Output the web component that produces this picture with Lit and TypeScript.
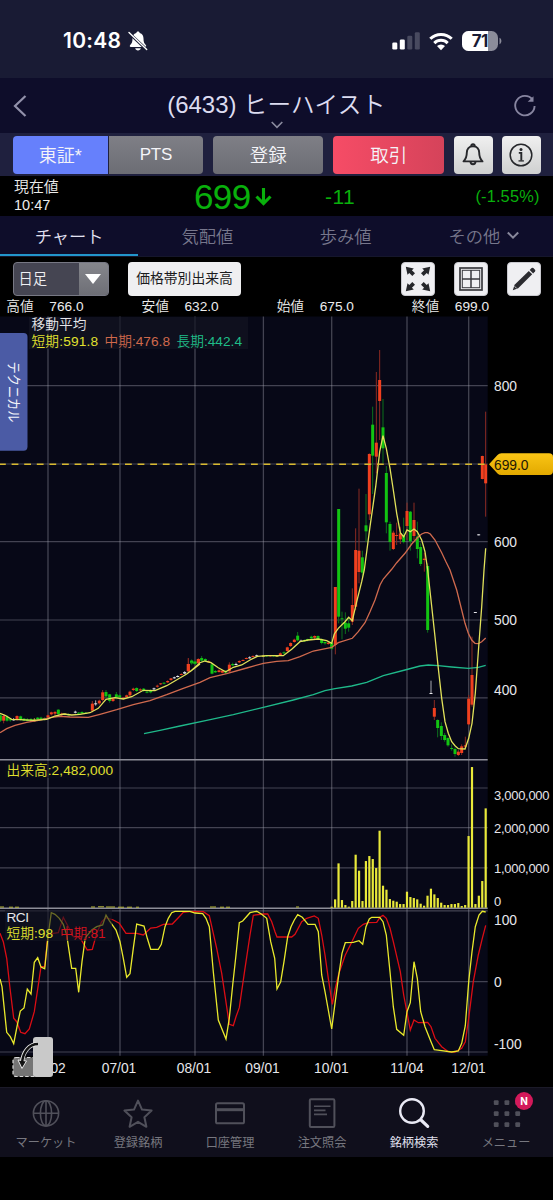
import { LitElement, html, svg, css } from "lit";
import { customElement, property } from "lit/decorators.js";

type Candle = [kind: string, x: number, high: number, top: number, bottom: number, low: number];

/* Point lists are kept in third-pixel units, relative to a local origin. */
const trace = (ox: number, oy: number, list: string): string =>
  list
    .trim()
    .split(/\s+/)
    .map((p) => {
      const [x, y] = p.split(",").map(Number);
      return `${(ox + x / 3).toFixed(1)},${(oy + y / 3).toFixed(1)}`;
    })
    .join(" ");

const candles = (ox: number, oy: number, list: string): Candle[] =>
  list
    .trim()
    .split(/\s+/)
    .map((c) => {
      const [k, x, h, t, b, l] = c.split(",");
      return [k, ox + +x / 3, oy + +h / 3, oy + +t / 3, oy + +b / 3, oy + +l / 3];
    });

const MA_SHORT = [
  trace(0, 600, "0,340 15,346 35,358 60,359 100,361 140,358 165,348 190,342 215,345 240,343 270,338 295,325 318,298 345,293 370,297 395,290 430,271 465,272 500,257 560,222 600,192"),
  trace(180, 580, "30,275 60,248 75,243 93,248 115,263 137,275 160,262 185,255 210,240 232,229 260,227 310,227 335,208 360,185 385,180 415,177 440,182 455,190"),
  trace(325, 560, "28,222 40,205 60,185 71,172 82,182 95,125 110,65"),
  trace(325, 340, "118,690 135,560 152,440 164,335 174,287 184,325 195,385 205,450 215,520 226,578 236,590 246,570 256,575 267,567 277,575 290,600 300,635 308,690"),
  trace(325, 560, "318,120 330,230 340,325 350,415 360,485 370,520 380,545 390,557 400,566 420,567 431,535 441,490 451,400 461,260 470,140"),
  trace(325, 340, "477,690 482,625"),
].join(" ");

const MA_MID = [
  trace(0, 600, "0,398 20,386 45,376 80,367 120,360 150,353 180,349 210,351 265,352 300,343 350,329 400,314 450,302 500,284 550,265 600,247"),
  trace(180, 580, "90,293 140,281 200,264 250,250 290,244 325,242 360,230 400,213 455,202"),
  trace(325, 560, "40,248 82,235 100,215 120,188 135,155 150,120 165,75 175,57 200,28"),
  trace(325, 340, "215,668 240,640 260,612 280,590 290,582 300,578 308,578 316,582 330,600 350,638 362,664"),
  trace(325, 560, "375,30 395,90 410,150 420,190 430,220 440,240 450,250 460,251 470,245 482,234"),
].join(" ");

const MA_LONG = [
  trace(0, 600, "432,401 480,391 540,378"),
  trace(180, 580, "0,438 80,421 160,404 250,382 340,360 400,344"),
  trace(325, 560, "0,392 30,386 80,378 125,367 175,347 240,330 285,318 310,315 340,317 380,321 430,325 460,322 482,316"),
].join(" ");

const RCI_SHORT = [
  trace(0, 755, "0,672 6,695 20,832 31,845 41,866 51,815 61,768 72,759 82,702 93,717 103,622 113,608 123,636 134,641 144,545 154,473 165,478 178,490 190,508 200,540 215,640 227,640 236,712 246,620 256,548 275,525 290,515 308,510 318,480 328,497 348,525 360,560 370,610 380,667 390,656 400,580 410,507 432,513 442,550 452,583 475,583 484,568 495,515 505,490 515,473 525,469 570,469 585,474 608,476 618,490 628,515 640,650 655,795 678,852 688,790 698,690 708,600 718,503 728,498 750,473 770,469 785,478 800,490 812,560 824,610"),
  trace(275, 755, "6,702 17,680 27,620 38,545 48,515 58,495 68,479 82,487 99,508 120,508 130,530 140,660 150,710 160,765 170,822 180,745 190,670 201,595 211,563 235,562 252,557 263,568 273,515 283,492 290,487 314,487 324,500 334,540 345,650 355,755 365,823 386,841 396,770 406,743 417,620 427,670 437,770 450,815 468,860 478,884 500,887 530,891 550,888 560,865 571,812 581,680 591,590 601,515 612,480 622,469 632,471"),
].join(" ");

const RCI_MID = [
  trace(0, 755, "0,535 10,560 20,610 30,700 41,790 50,800 62,832 75,836 88,822 103,770 115,690 123,635 134,635 144,540 160,535 175,533 190,487 205,515 220,545 240,548 262,585 277,583 290,535 305,500 318,488 340,495 358,505 378,535 410,535 430,540 452,519 470,517 490,508 517,507 535,488 550,472 575,469 610,470 628,482 650,580 665,655 688,808 700,812 708,785 718,758 735,640 750,540 760,481 790,477 803,477 815,500 825,530"),
  trace(275, 755, "6,546 50,546 60,538 80,500 95,490 118,483 130,490 140,540 150,600 160,670 172,748 181,700 191,657 211,600 232,558 250,520 265,508 280,503 305,502 315,487 324,481 334,490 345,520 355,560 376,650 386,720 406,825 417,795 430,803 458,802 468,815 480,850 500,875 520,890 540,891 560,880 571,860 581,790 595,680 610,600 622,550 632,511"),
].join(" ");

const CANDLES: Candle[] = [
  ...candles(0, 600, `g,1,340,346,362,366 r,11,342,348,362,370 g,21,345,350,362,365 g,31,355,358,361,365 w,41,354,357,361,362 r,51,346,348,360,362
    g,62,347,349,360,362 g,72,354,356,362,363 g,82,354,358,363,364 g,93,354,357,362,363 y,103,354,359,364,365 g,113,351,353,358,360
    g,123,350,353,359,361 g,134,352,354,359,361 r,144,344,346,352,354 r,154,335,337,343,346 r,165,333,336,341,348 g,175,328,329,342,346
    r,185,338,341,346,348 y,195,339,341,344,346 g,206,340,342,346,347 w,226,332,335,338,340 g,236,336,338,341,342 g,246,334,336,340,342
    g,257,336,338,340,342 r,277,303,311,332,337 w,287,301,310,313,317 r,298,299,302,310,314 r,308,270,277,300,304 g,318,270,276,289,294
    g,329,282,283,303,308 r,339,293,295,303,306 g,349,276,283,292,298 g,359,283,286,292,296 r,370,291,293,297,298 r,380,284,286,291,293
    r,390,272,275,286,290 r,400,263,266,270,273 g,410,262,264,273,276 r,421,265,268,271,273 g,431,264,266,273,276 g,441,272,275,278,280
    g,452,268,271,277,280 w,462,263,265,268,270 r,472,254,257,260,263 r,482,249,250,253,255 g,492,247,248,251,253 r,503,241,243,247,249
    r,513,234,235,240,243 w,523,230,232,234,236 w,533,226,228,231,232 r,544,220,222,224,226 w,554,214,217,220,222
    r,565,175,192,213,216 g,575,179,182,190,194 g,585,183,185,191,194 r,595,176,178,190,193`),
  ...candles(180, 580, `w,14,275,277,280,282 r,25,234,252,274,277 g,35,239,242,247,250 g,45,243,245,251,254 r,55,235,237,249,253
    g,65,228,234,242,245 g,76,235,237,242,244 r,86,241,244,247,249 g,96,250,253,281,283 g,106,270,273,277,279 r,117,268,271,276,278
    r,127,270,272,278,280 g,137,270,273,278,281 r,148,247,254,274,276 g,158,248,252,256,259 w,168,248,252,254,256 r,178,241,243,247,249
    r,189,238,240,242,243 r,199,232,234,236,238 w,209,229,232,234,236 r,219,226,228,231,232 w,230,224,226,228,229 y,250,225,227,228,230
    g,260,225,226,229,231 r,271,225,226,228,230 g,281,225,226,229,230 y,291,226,227,228,229 r,301,217,220,225,227 g,312,214,217,220,223
    r,322,200,202,213,216 r,332,187,189,198,201 r,343,176,179,186,188 g,353,156,167,181,184 w,363,179,182,184,186 g,373,178,180,184,186
    g,383,176,177,180,184 g,394,167,170,175,178 r,404,166,168,173,177 g,414,166,168,178,180 g,425,175,178,189,193 g,435,184,186,190,194
    r,445,186,188,192,194`),
  ...candles(325, 560, `g,20,240,248,266,270 r,31,81,81,255,283 g,41,-153,-153,170,190 g,51,155,175,178,238 g,61,157,188,206,222
    g,71,172,190,203,215 r,82,85,135,185,195 r,92,-95,-30,140,150 r,102,-214,-28,36,70 g,112,-28,-8,38,52`),
  ...candles(325, 340, `g,123,462,556,574,606 r,133,340,342,523,540 g,143,200,254,347,462 r,154,96,308,350,400 r,164,30,120,183,300
    g,174,177,262,325,370 g,184,378,399,547,580 g,195,545,552,606,632 r,205,572,578,627,630 r,215,548,585,588,615
    r,226,560,580,598,612 g,236,533,587,606,610 r,246,488,513,558,600 g,256,513,515,604,632 r,267,488,540,588,600 g,277,545,590,627,655
    g,287,610,621,672,678 r,298,638,656,660,695`),
  ...candles(325, 560, `g,308,10,18,210,218 w,318,362,399,402,402 r,328,420,444,470,480 g,338,478,480,504,532 g,349,487,498,528,540
    g,359,519,525,540,545 g,369,532,534,556,560 g,380,553,564,567,572 g,390,562,567,582,590 r,400,570,575,585,588 r,410,553,559,579,585
    r,421,530,556,560,568 r,431,405,416,493,495 r,441,230,345,434,440 w,451,156,156,159,159`),
  ...candles(325, 340, `w,461,583,583,586,586 r,472,347,348,417,418 r,482,215,373,430,530`),
];

const VOLUME = [
  3, 25, 133, 23, 8, 3, 20, 159, 111, 20, 140, 155, 146, 119, 231, 66, 54, 26, 21, 18, 11, 11, 48, 32, 29, 25, 12, 6, 36, 57, 40,
  29, 15, 8, 8, 11, 11, 14, 5, 8, 215, 422, 11, 36, 80, 298,
].map((h, i) => [331.7 + i * 3.422, h / 3]);

const INK: Record<string, string> = { r: "#f0401f", g: "#12c412", w: "#e8e8ec", y: "#dede30" };
const WICK: Record<string, string> = { r: "#8c2a22", g: "#0d701d", w: "#aaaab4", y: "#8d8d30" };

const COLS = [48, 120, 195, 263.4, 331.7, 407, 468.7];
const ROWS = [385.7, 464, 541.7, 620, 697.8, 788, 827.7, 867.8, 910.8, 981.6, 1052];

@customElement("price-chart")
export class PriceChart extends LitElement {
  static styles = css`
    :host { display: block; position: relative; width: 553px; height: 771px; }
    svg { display: block; }
    text { font-family: "Liberation Sans", "Noto Sans CJK JP", sans-serif; font-weight: 350; }
    .white { fill: #e6e6ea; }
    .yellow { fill: #e0e02e; }
    .orange { fill: #d0694c; }
    .green { fill: #1fbd88; }
    .red { fill: #d3121d; }
    .side { font-weight: 400; }
  `;
  render() {
    return html`<svg width="553" height="771" viewBox="0 316 553 771">
      <defs>
        <linearGradient id="gold" x1="0" y1="0" x2="0" y2="1"><stop offset="0" stop-color="#fac515"/><stop offset="1" stop-color="#e2a900"/></linearGradient>
      </defs>
      <rect x="0" y="316" width="553" height="771" fill="#000"/>
      <rect x="0" y="316.5" width="487.7" height="739.3" fill="#070817"/>
      ${COLS.map((x) => svg`<line x1=${x} x2=${x} y1="316.5" y2="1055.8" stroke="#a6a6b4" stroke-opacity=".38" stroke-width="1.3"/>`)}
      ${ROWS.map((y) => svg`<line x1="0" x2="487.7" y1=${y} y2=${y} stroke="#a6a6b4" stroke-opacity=".38" stroke-width="1.2"/>`)}
      <line x1="0" x2="487.7" y1="759.7" y2="759.7" stroke="#8d8d98" stroke-width="1.6"/>
      <line x1="0" x2="487.7" y1="908.3" y2="908.3" stroke="#8d8d98" stroke-width="1.4"/>

      ${CANDLES.map(([k, x, h, t, b, l]) => svg`
        <line x1=${x} x2=${x} y1=${h} y2=${l} stroke=${WICK[k]} stroke-width="1"/>
        <rect x=${x - 1.5} y=${t} width="3" height=${Math.max(b - t, 1)} fill=${INK[k]}/>`)}
      <polyline points=${MA_LONG} fill="none" stroke="#1fb98a" stroke-width="1.3"/>
      <polyline points=${MA_MID} fill="none" stroke="#d06a4e" stroke-width="1.3"/>
      <polyline points=${MA_SHORT} fill="none" stroke="#e2e25a" stroke-width="1.3"/>
      <line x1="0" x2="487" y1="464.3" y2="464.3" stroke="#d8b92e" stroke-width="1.4" stroke-dasharray="6.8 5.8" stroke-dashoffset="1"/>

      ${VOLUME.map(([x, h]) => svg`<rect x=${x - 1.1} y=${907.7 - h} width="2.2" height=${h} fill="#e9e93a"/>`)}
      <path d="M0 907h4M9 907.2h4M15 907.2h4M91 907h4M98 906.8h6M106 907h9M118 907.2h6M127 907.2h5M136 907.2h3M210 907h6M220 907.2h4M226 907.2h4M296 907h3" stroke="#b9b93c" stroke-width="1"/>

      <polyline points=${RCI_MID} fill="none" stroke="#db0d14" stroke-width="1.3"/>
      <polyline points=${RCI_SHORT} fill="none" stroke="#e9e92c" stroke-width="1.3"/>

      <rect x="29" y="317" width="219" height="32" fill="#131422" fill-opacity=".68"/>
      <rect x="5" y="761" width="110" height="17" fill="#0a0b19" fill-opacity=".5"/>
      <rect x="5" y="910" width="107" height="31" fill="#131422" fill-opacity=".6"/>
      <g font-size="13.7">
        <text class="white" x="31.5" y="329" textLength="55">移動平均</text>
        <text class="yellow" x="31.5" y="345.5" textLength="66.5">短期:591.8</text>
        <text class="orange" x="104.5" y="345.5" textLength="65.5">中期:476.8</text>
        <text class="green" x="176.5" y="345.5" textLength="65.5">長期:442.4</text>
        <text class="yellow" x="6.5" y="774.5" textLength="106.5">出来高:2,482,000</text>
        <text class="white" x="6.5" y="922" textLength="22.5">RCI</text>
        <text class="yellow" x="6.5" y="938" textLength="46.5">短期:98</text>
        <text class="red" x="60" y="938" textLength="45.5">中期:81</text>
      </g>
      <g class="white" font-size="13.8">
        <text x="494" y="390.500">800</text>
        <text x="494" y="547">600</text>
        <text x="494" y="625">500</text>
        <text x="494" y="695">400</text>
        <text x="494" y="924.500">100</text>
        <text x="494" y="986.500">0</text>
        <text x="494" y="1049">-100</text>
        <text x="494" y="800" font-size="13" textLength="55.5">3,000,000</text>
        <text x="494" y="832.500" font-size="13" textLength="55.5">2,000,000</text>
        <text x="494" y="872.500" font-size="13" textLength="55.5">1,000,000</text>
        <text x="494" y="905.500" font-size="13">0</text>
      </g>
      <g class="white" font-size="13.8" text-anchor="middle">
        <text x="48.5" y="1073">06/02</text><text x="119" y="1073">07/01</text><text x="194" y="1073">08/01</text>
        <text x="262.5" y="1073">09/01</text><text x="331.3" y="1073">10/01</text><text x="407" y="1073">11/04</text><text x="468.5" y="1073">12/01</text>
      </g>

      <path d="M489 464.300 L497.500 455 Q499 453.300 501.500 453.300 H549 Q553 453.300 553 457 V471 Q553 475 549 475 H501.500 Q499 475 497.500 473.500 Z" fill="url(#gold)"/>
      <text x="494" y="469.500" font-size="13.8" fill="#1d1705" textLength="34.500">699.0</text>

      <path d="M0 333 H23.500 Q27.500 333 27.500 337 V446.500 Q27.500 450.700 23.500 450.700 H0 Z" fill="#4b5ba5"/>
      <text class="side" transform="translate(8.800 361.500) rotate(90)" font-size="14" fill="#f2f3fa" textLength="61" lengthAdjust="spacingAndGlyphs">テクニカル</text>

      <rect x="13" y="1057.500" width="26" height="19" rx="3" fill="#757575" stroke="#d8d8d8" stroke-width="1.200" stroke-dasharray="3.500 2"/>
      <rect x="33" y="1037" width="20" height="40" rx="3" fill="#c9c9c9"/>
      <path d="M38 1044 C29 1044 23 1052 22 1062" stroke="#e8e8e8" stroke-width="4.200" fill="none"/>
      <path d="M18 1060 L22 1068.500 L26.500 1061 Z" fill="#161616" stroke="#e8e8e8" stroke-width="1"/>
      <path d="M38 1044 C29 1044 23 1052 22 1063" stroke="#101010" stroke-width="2.400" fill="none"/>
    </svg>`;
  }
}

@customElement("nav-item")
export class NavItem extends LitElement {
  @property() label = "";
  @property() icon = "";
  @property({ type: Boolean, reflect: true }) active = false;
  static styles = css`
    :host { display: flex; flex-direction: column; align-items: center; position: relative; color: #50505a; flex: 1; }
    svg { display: block; margin-top: 7.7px; }
    .label { font-size: 12.2px; line-height: 18px; margin-top: 4.3px; color: #77777f; white-space: nowrap; font-weight: 400; }
    :host([active]) { color: #e9e9f4; }
    :host([active]) .label { color: #dfdfea; }
    .badge { position: absolute; left: 55px; top: 4px; width: 18px; height: 18px; border-radius: 9px; background: #d3195a; color: #fff; font: 700 10px/18px Inter, sans-serif; text-align: center; }
  `;
  glyph() {
    switch (this.icon) {
      case "globe":
        return svg`<g stroke-width="1.6"><circle cx="17" cy="17.3" r="12.6"/><ellipse cx="17" cy="17.3" rx="5.6" ry="12.6"/><path d="M17 4.7v25.200M4.400 17.300h25.200"/></g>`;
      case "star":
        return svg`<path stroke-width="2" stroke-linejoin="round" d="M17 4.600l4 9 9.600 1-7.200 6.600 2 9.600-8.400-5-8.400 5 2-9.600-7.200-6.600 9.600-1z"/>`;
      case "card":
        return svg`<rect stroke-width="2" x="3" y="7.300" width="28" height="20" rx="1.600"/><path stroke-width="3" d="M3 13.700h28"/>`;
      case "doc":
        return svg`<rect stroke-width="2" x="4.800" y="3.300" width="24.600" height="27.600" rx="1.200"/><g stroke-width="1.600"><path d="M9 10.300h16.500M9 14.400h11.500M9 18.400h13"/></g>`;
      case "search":
        return svg`<circle stroke-width="2.400" cx="15" cy="15" r="11.800"/><path stroke-width="3.200" stroke-linecap="round" d="M24 24l6.700 6.400"/>`;
      default:
        return svg`<g fill="currentColor" stroke="none">${[5, 16, 27].map((y) => [4.5, 15.2, 26].map((x) => svg`<rect x=${x + 0.3} y=${y - 0.7} width="4.8" height="4.8" rx="1"/>`))}</g>`;
    }
  }
  render() {
    return html`<svg width="34" height="34" viewBox="0 0 34 34" fill="none" stroke="currentColor">${this.glyph()}</svg>
      <div class="label">${this.label}</div>
      ${this.icon === "grid" ? html`<span class="badge">N</span>` : null}`;
  }
}

@customElement("app-root")
export class AppRoot extends LitElement {
  static styles = css`
    :host { display: flex; flex-direction: column; width: 553px; height: 1200px; background: #000; overflow: hidden; font-family: "Liberation Sans", "Noto Sans CJK JP", sans-serif; font-weight: 350; color: #e8e8f0; box-sizing: border-box; }
    div, span, button { box-sizing: border-box; white-space: nowrap; }
    svg { display: block; flex: none; }
    .status { height: 78px; background: #191b34; display: flex; align-items: center; padding: 4px 51px 0 63px; color: #fff; }
    .clock { font: 600 21px/24px Inter, sans-serif; width: 60px; letter-spacing: 0.3px; }
    .grow { flex: 1; }
    .bell-off { margin-left: 4.5px; }
    .signal { margin-right: 9px; }
    .wifi { margin-right: 9px; }
    .head { height: 55px; background: #0e0d2a; display: grid; grid-template-columns: 100px 1fr 100px; justify-items: center; color: #dcdcf0; }
    .back { justify-self: start; margin: 17px 0 0 13px; }
    .reload { justify-self: end; margin: 16px 16px 0 0; }
    .title { display: flex; flex-direction: column; align-items: center; }
    .name { font-size: 23px; line-height: 30px; margin-top: 12px; margin-bottom: 1px; display: flex; gap: 7px; }
    .code { font-size: 24px; letter-spacing: 0; }
    .kana { font-size: 23.600px; letter-spacing: 0.4px; }
    .actions { height: 43px; background: #1f203e; display: flex; padding: 2.5px 12.5px 0 12.5px; }
    .btn { height: 38px; display: flex; align-items: center; justify-content: center; font-size: 18px; color: #f4f4f8; background: linear-gradient(#7f7f86, #6c6d74); border-radius: 4px; }
    .tse { width: 95.5px; background: #6680fc; border-radius: 4px 0 0 4px; margin-right: 1px; padding-bottom: 1px; }
    .pts { width: 94.5px; border-radius: 0 4px 4px 0; margin-right: 10px; font-size: 17px; letter-spacing: -0.2px; padding-top: 1.5px; }
    .reg { width: 110.5px; margin-right: 10px; font-size: 18.5px; padding-bottom: 1px; }
    .trade { width: 111px; margin-right: 10px; font-size: 18.5px; padding-bottom: 1px; background: linear-gradient(90deg, #f64c66, #d5435a); }
    .sq { width: 38.5px; background: linear-gradient(#f0f0f0, #cfd0d0); color: #222; }
    .sq + .sq { margin-left: 9.5px; }
    .price { height: 40px; background: #000; display: grid; grid-template-columns: 194px 131px 1fr auto; align-items: center; padding-right: 13.5px; color: #09b00c; }
    .now { padding-left: 14px; font-size: 14.5px; line-height: 18px; color: #ececec; margin-top: -2px; }
    .now-label { font-size: 14.9px; }
    .last { font-size: 35px; display: flex; align-items: center; letter-spacing: -0.6px; gap: 4.5px; padding-top: 1px; }
    .diff { font-size: 21px; letter-spacing: 0.4px; padding-top: 1px; }
    .rate { font-size: 16.4px; letter-spacing: 0.15px; margin-top: -1px; }
    .tabs { height: 40px; background: #0e0d2a; display: grid; grid-template-columns: repeat(4, 1fr); font-size: 17.3px; color: #77778c; }
    .tab { display: flex; align-items: center; justify-content: center; gap: 7px; border-bottom: 2.5px solid transparent; }
    .tab.on { color: #e2e2f2; border-color: #2295cb; }
    .tools { height: 42px; background: #000; border-top: 1px solid #15162c; display: flex; padding: 5px 12.5px 0 12.5px; }
    .pick { width: 96.5px; height: 34px; border: 1px solid #777884; border-radius: 4px; display: flex; background: #454552; color: #f0f0f4; font-size: 14.3px; overflow: hidden; }
    .pick-text { width: 65px; padding-left: 5px; line-height: 32px; }
    .pick-arrow { flex: 1; background: linear-gradient(#85868c, #6e6f76); display: flex; align-items: center; justify-content: center; }
    .zone { width: 113px; height: 34px; margin-left: 19px; background: #efeff1; color: #1b1b1d; border-radius: 4px; font-size: 13.8px; line-height: 33px; text-align: center; font-weight: 400; }
    .ibtn { width: 34px; height: 34px; border-radius: 4px; background: #efeff2; border: 1px solid #c9c9cf; display: flex; align-items: center; justify-content: center; margin-left: 18.8px; }
    .ohlc { height: 18px; background: #000; display: flex; font-size: 13.7px; line-height: 17px; padding-left: 6.3px; color: #ececec; }
    .cell { width: 135.200px; display: grid; grid-template-columns: 43px 1fr; }
    .nav { height: 70px; background: #100f1c; border-top: 1px solid #1b1a28; display: flex; padding-right: 1px; }
  `;

  render() {
    return html`
      <div class="status">
        <span class="clock">10:48</span>
        <svg class="bell-off" width="20" height="20" viewBox="0 0 20 20">
          <path fill="#fff" d="M10 .5c-1 0-1.600.6-1.700 1.500C5.600 2.700 4.500 5 4.500 7.500c0 3.700-.7 5-2.300 6.500-.8.8-.5 1.900.7 1.900h14.200c1.200 0 1.500-1.100.7-1.900-1.600-1.500-2.300-2.800-2.300-6.500 0-2.500-1.100-4.800-3.800-5.500C11.600 1.100 11 .5 10 .5zM7.200 17.200h5.600c-.3 1.400-1.400 2.200-2.800 2.200s-2.500-.8-2.800-2.200z"/>
          <path d="M1.500 2.500l17 16" stroke="#191b34" stroke-width="3"/><path d="M1 1.600l17.700 17" stroke="#fff" stroke-width="1.400" stroke-linecap="round"/>
        </svg>
        <span class="grow"></span>
        <svg class="signal" width="28" height="18" viewBox="0 0 28 18" fill="#fff">
          <rect x=".3" y="10.500" width="5" height="7" rx="1.300"/><rect x="7.800" y="7.500" width="5" height="10" rx="1.300"/>
          <g fill="#484a5f"><rect x="15.300" y="3.800" width="5" height="13.700" rx="1.300"/><rect x="22.800" y=".3" width="5" height="17.200" rx="1.300"/></g>
        </svg>
        <svg class="wifi" width="24" height="19" viewBox="0 0 24 19" fill="none" stroke="#fff" stroke-width="3">
          <path d="M1.300 6.800a15.200 15.200 0 0 1 21.400 0"/><path d="M5.300 11.100a9.500 9.500 0 0 1 13.400 0"/><path fill="#fff" stroke="none" d="M12 18.300l-4-4.200a5.600 5.600 0 0 1 8 0z"/>
        </svg>
        <svg width="40" height="20" viewBox="0 0 40 20">
          <defs><clipPath id="cell"><rect width="36" height="20" rx="6.500"/></clipPath></defs>
          <g clip-path="url(#cell)"><rect width="36" height="20" fill="#8b8c9a"/><rect width="26" height="20" fill="#fff"/></g>
          <path d="M37.500 6.800c2.500 1 2.500 5.400 0 6.400z" fill="#8b8c9a"/>
          <text x="17.800" y="16.300" text-anchor="middle" font-family="Inter, sans-serif" font-weight="700" font-size="17" letter-spacing="-.6" fill="#191b34">71</text>
        </svg>
      </div>

      <div class="head">
        <svg class="back" width="14" height="22" viewBox="0 0 14 22" fill="none" stroke="#9291aa" stroke-width="2.200"><path d="M12.500 1L2 11l10.500 10"/></svg>
        <div class="title">
          <div class="name"><span class="code">(6433)</span><span class="kana">ヒーハイスト</span></div>
          <svg width="12" height="8" viewBox="0 0 12 8" fill="none" stroke="#8a8a9e" stroke-width="1.600"><path d="M.7 1L6 6.400 11.300 1"/></svg>
        </div>
        <svg class="reload" width="24" height="24" viewBox="0 0 24 24" fill="none" stroke="#8785a0" stroke-width="1.900"><path d="M19.600 5.700A9.700 9.700 0 1 0 21.600 12"/><path fill="#8785a0" stroke="none" d="M20.500 2.300v5.500h-5.800z"/></svg>
      </div>

      <div class="actions">
        <div class="btn tse">東証*</div><div class="btn pts">PTS</div><div class="btn reg">登録</div><div class="btn trade">取引</div>
        <div class="btn sq"><svg width="22" height="24" viewBox="0 0 22 24" fill="none" stroke="#26272b" stroke-width="1.900" stroke-linejoin="round"><path d="M11 3.200c-4 0-6.200 2.900-6.200 6.600 0 4.600-1.300 6.600-3.300 8.600h19c-2-2-3.300-4-3.300-8.600 0-3.700-2.200-6.600-6.200-6.600z"/><path d="M8.500 18.600c0 3.600 5 3.600 5 0M9.300 3c0-2.400 3.400-2.400 3.400 0"/></svg></div>
        <div class="btn sq"><svg width="24" height="24" viewBox="0 0 24 24" fill="none" stroke="#26272b" stroke-width="1.500"><circle cx="12" cy="12" r="10.800"/><path stroke-width="1.900" d="M9.800 9.900h2.500v7.700"/><path stroke-width="1.300" d="M9.500 17.900h5.400"/><circle cx="12" cy="6.400" r="1.500" fill="#26272b" stroke="none"/></svg></div>
      </div>

      <div class="price">
        <div class="now"><div class="now-label">現在値</div><div>10:47</div></div>
        <div class="last">699<svg width="17" height="20" viewBox="0 0 17 20" fill="none" stroke="#09b00c" stroke-width="3.100"><path d="M8.500 1v15M1.500 9.500l7 7 7-7"/></svg></div>
        <div class="diff">-11</div>
        <div class="rate">(-1.55%)</div>
      </div>

      <div class="tabs">
        <div class="tab on">チャート</div><div class="tab">気配値</div><div class="tab">歩み値</div>
        <div class="tab">その他<svg width="12" height="9" viewBox="0 0 12 9" fill="none" stroke="#88889b" stroke-width="2"><path d="M.8 1.500L6 6.700l5.200-5.200"/></svg></div>
      </div>

      <div class="tools">
        <div class="pick"><span class="pick-text">日足</span><span class="pick-arrow"><svg width="16" height="10" viewBox="0 0 16 10"><path d="M0 0h16L8 10z" fill="#fff"/></svg></span></div>
        <div class="zone">価格帯別出来高</div>
        <span class="grow"></span>
        <div class="ibtn"><svg width="26" height="26" viewBox="0 0 26 26"><g fill="#26272b">${[0, 90, 180, 270].map((a) => svg`<path transform=${`rotate(${a} 13 13)`} d="M.8 .8L8.800 2.500 6.900 4.300 10 7.300 7.300 10 4.300 6.900 2.500 8.800z"/>`)}</g></svg></div>
        <div class="ibtn"><svg width="24" height="24" viewBox="0 0 24 24" fill="none" stroke="#3a3a3f"><rect x="1" y="1" width="22" height="22" stroke-width="1.700"/><path stroke-width="1.500" d="M3 12h18M12 3v18"/><rect x="3.300" y="3.300" width="17.400" height="17.400" stroke-width="1"/></svg></div>
        <div class="ibtn"><svg width="26" height="26" viewBox="0 0 26 26" fill="#2b2b30"><path d="M1.800 24.200L3.600 18.700 17.800 4.900l3.400 3.400L7.200 22.300z"/><path d="M18.700 4l1.900-1.900q.9-.8 1.700 0l1.700 1.700q.8.9 0 1.700l-1.900 1.900z"/><path d="M3.600 20.300l2.100 2.100" stroke="#efeff2" stroke-width=".8"/></svg></div>
      </div>

      <div class="ohlc">
        <div class="cell"><span>高値</span><span>766.0</span></div><div class="cell"><span>安値</span><span>632.0</span></div>
        <div class="cell"><span>始値</span><span>675.0</span></div><div class="cell"><span>終値</span><span>699.0</span></div>
      </div>

      <price-chart></price-chart>

      <div class="nav">
        <nav-item icon="globe" label="マーケット"></nav-item>
        <nav-item icon="star" label="登録銘柄"></nav-item>
        <nav-item icon="card" label="口座管理"></nav-item>
        <nav-item icon="doc" label="注文照会"></nav-item>
        <nav-item icon="search" label="銘柄検索" active></nav-item>
        <nav-item icon="grid" label="メニュー"></nav-item>
      </div>
    `;
  }
}
